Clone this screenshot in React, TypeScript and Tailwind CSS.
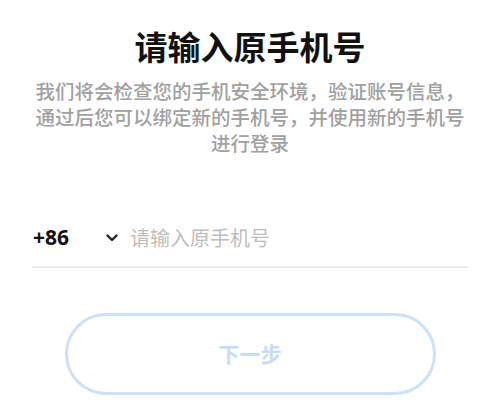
import React from 'react';

const App: React.FC = () => {
  return (
    <div
      className="w-[500px] h-[414px] bg-white flex flex-col items-center overflow-hidden"
      style={{ fontFamily: '"Noto Sans CJK SC", "Noto Sans", sans-serif' }}
    >
      <h1 className="mt-[24px] text-[33px] leading-[44px] font-bold text-[#111]">
        请输入原手机号
      </h1>
      <p className="mt-[10px] text-center text-[19.5px] leading-[26px] font-medium text-[#a0a0a0] whitespace-nowrap">
        我们将会检查您的手机安全环境，验证账号信息，
        <br />
        通过后您可以绑定新的手机号，并使用新的手机号
        <br />
        进行登录
      </p>
      <div className="mt-[62px] w-[436px] flex items-center h-[40px] border-b-2 border-[#ececec] pb-[8px] box-content">
        <span
          className="w-[72px] pl-[1px] text-[21px] font-bold text-[#111]"
          style={{ fontFamily: '"Open Sans", "Noto Sans", sans-serif' }}
        >
          +86
        </span>
        <svg width="14" height="8" viewBox="0 0 14 8" className="ml-[1px]">
          <path d="M2.5 1.5 L7 6 L11.5 1.5" fill="none" stroke="#222" strokeWidth="2.4" strokeLinecap="round" strokeLinejoin="round" />
        </svg>
        <span className="ml-[11px] text-[20px] text-[#bdbdbd]">请输入原手机号</span>
      </div>
      <button className="mt-[45px] w-[371px] h-[82px] rounded-full border-[3px] border-[#cfe0f8] text-[21px] font-bold text-[#c6dbf6]">
        下一步
      </button>
    </div>
  );
};

export default App;
